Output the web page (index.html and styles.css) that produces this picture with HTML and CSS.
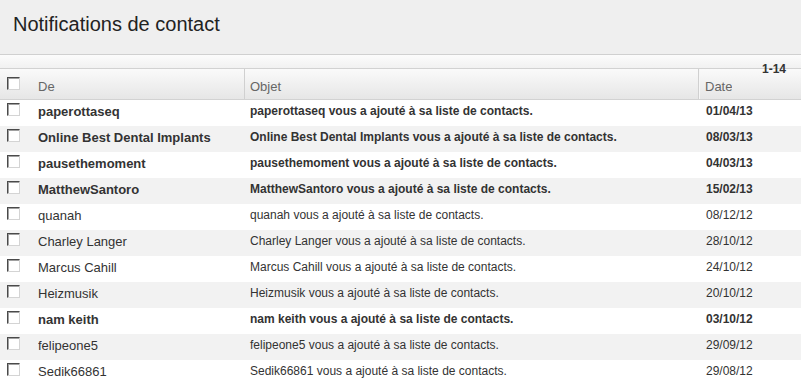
FILE: index.html
```html
<!DOCTYPE html>
<html lang="fr">
<head>
    <meta charset="UTF-8">
    <title>Notifications de contact</title>
    <link rel="stylesheet" href="styles.css">
</head>
<body>
    <div class="page-title">
        <h1>Notifications de contact</h1>
    </div>

    <div class="toolbar"></div>

    <div class="notif-list">
        <span class="count">1-14</span>
        <div class="row head">
            <div class="cell check"><span class="box"></span></div>
            <div class="cell from">De</div>
            <div class="cell subject">Objet</div>
            <div class="cell date">Date</div>
        </div>

        <div class="rows">
            <div class="row unread">
                <div class="cell check"><span class="box"></span></div>
                <div class="cell from">paperottaseq</div>
                <div class="cell subject">paperottaseq vous a ajouté à sa liste de contacts.</div>
                <div class="cell date">01/04/13</div>
            </div>
            <div class="row unread">
                <div class="cell check"><span class="box"></span></div>
                <div class="cell from">Online Best Dental Implants</div>
                <div class="cell subject">Online Best Dental Implants vous a ajouté à sa liste de contacts.</div>
                <div class="cell date">08/03/13</div>
            </div>
            <div class="row unread">
                <div class="cell check"><span class="box"></span></div>
                <div class="cell from">pausethemoment</div>
                <div class="cell subject">pausethemoment vous a ajouté à sa liste de contacts.</div>
                <div class="cell date">04/03/13</div>
            </div>
            <div class="row unread">
                <div class="cell check"><span class="box"></span></div>
                <div class="cell from">MatthewSantoro</div>
                <div class="cell subject">MatthewSantoro vous a ajouté à sa liste de contacts.</div>
                <div class="cell date">15/02/13</div>
            </div>
            <div class="row">
                <div class="cell check"><span class="box"></span></div>
                <div class="cell from">quanah</div>
                <div class="cell subject">quanah vous a ajouté à sa liste de contacts.</div>
                <div class="cell date">08/12/12</div>
            </div>
            <div class="row">
                <div class="cell check"><span class="box"></span></div>
                <div class="cell from">Charley Langer</div>
                <div class="cell subject">Charley Langer vous a ajouté à sa liste de contacts.</div>
                <div class="cell date">28/10/12</div>
            </div>
            <div class="row">
                <div class="cell check"><span class="box"></span></div>
                <div class="cell from">Marcus Cahill</div>
                <div class="cell subject">Marcus Cahill vous a ajouté à sa liste de contacts.</div>
                <div class="cell date">24/10/12</div>
            </div>
            <div class="row">
                <div class="cell check"><span class="box"></span></div>
                <div class="cell from">Heizmusik</div>
                <div class="cell subject">Heizmusik vous a ajouté à sa liste de contacts.</div>
                <div class="cell date">20/10/12</div>
            </div>
            <div class="row unread">
                <div class="cell check"><span class="box"></span></div>
                <div class="cell from">nam keith</div>
                <div class="cell subject">nam keith vous a ajouté à sa liste de contacts.</div>
                <div class="cell date">03/10/12</div>
            </div>
            <div class="row">
                <div class="cell check"><span class="box"></span></div>
                <div class="cell from">felipeone5</div>
                <div class="cell subject">felipeone5 vous a ajouté à sa liste de contacts.</div>
                <div class="cell date">29/09/12</div>
            </div>
            <div class="row">
                <div class="cell check"><span class="box"></span></div>
                <div class="cell from">Sedik66861</div>
                <div class="cell subject">Sedik66861 vous a ajouté à sa liste de contacts.</div>
                <div class="cell date">29/08/12</div>
            </div>
        </div>
    </div>
</body>
</html>
```

FILE: styles.css
```css
body {
    margin: 0;
    padding: 0;
    font-family: "Liberation Sans", Arial, sans-serif;
    color: #333;
    background: #fff;
}

.page-title {
    height: 54px;
    background: #efefef;
    border-bottom: 1px solid #d0d0d0;
    padding: 0 13px;
}

.page-title h1 {
    margin: 0;
    padding-top: 13px;
    font-size: 20px;
    font-weight: normal;
    color: #222;
}

.toolbar {
    height: 13px;
    background: linear-gradient(#fcfcfc, #f1f1f1);
}

.notif-list {
    position: relative;
}

.count {
    position: absolute;
    top: -6px;
    right: 15px;
    font-size: 12px;
    font-weight: bold;
    color: #333;
}

.row {
    display: flex;
    height: 26px;
    font-size: 12px;
    line-height: 15px;
    box-sizing: border-box;
    padding-top: 4px;
}

.rows .row:nth-child(even) {
    background: #f2f2f2;
}

.row.head {
    height: 32px;
    padding-top: 0;
    background: linear-gradient(#fafafa, #e6e6e6);
    border-top: 1px solid #d2d2d2;
    border-bottom: 1px solid #d2d2d2;
    font-size: 13px;
    color: #666;
}

.row.head .cell {
    display: flex;
    align-items: center;
    padding-top: 4px;
}

.row.head .cell.check {
    padding-top: 0;
    align-items: flex-start;
}

.row.head .box {
    margin-top: 8px;
}

.row.head .subject,
.row.head .date {
    border-left: 1px solid #d0d0d0;
}

.row.head .subject {
    padding-left: 5px;
}

.row.head .date {
    padding-left: 6px;
    box-shadow: inset 1px 0 0 #f6f6f6;
}

.unread {
    font-weight: bold;
}

.cell {
    white-space: nowrap;
    overflow: hidden;
}

.row .check {
    flex: none;
    width: 38px;
    padding-left: 7px;
    box-sizing: border-box;
    overflow: visible;
}

.box {
    display: block;
    width: 11px;
    height: 11px;
    background: #fff;
    border: 1px solid;
    border-color: #4a4a4a #d4d4d4 #d4d4d4 #4a4a4a;
    box-shadow: inset 1px 1px 0 #a0a0a0;
    margin-top: -1px;
}

.from {
    flex: none;
    width: 206px;
    font-size: 13px;
}

.subject {
    flex: none;
    width: 448px;
    padding-left: 6px;
}

.date {
    padding-left: 8px;
}
```
